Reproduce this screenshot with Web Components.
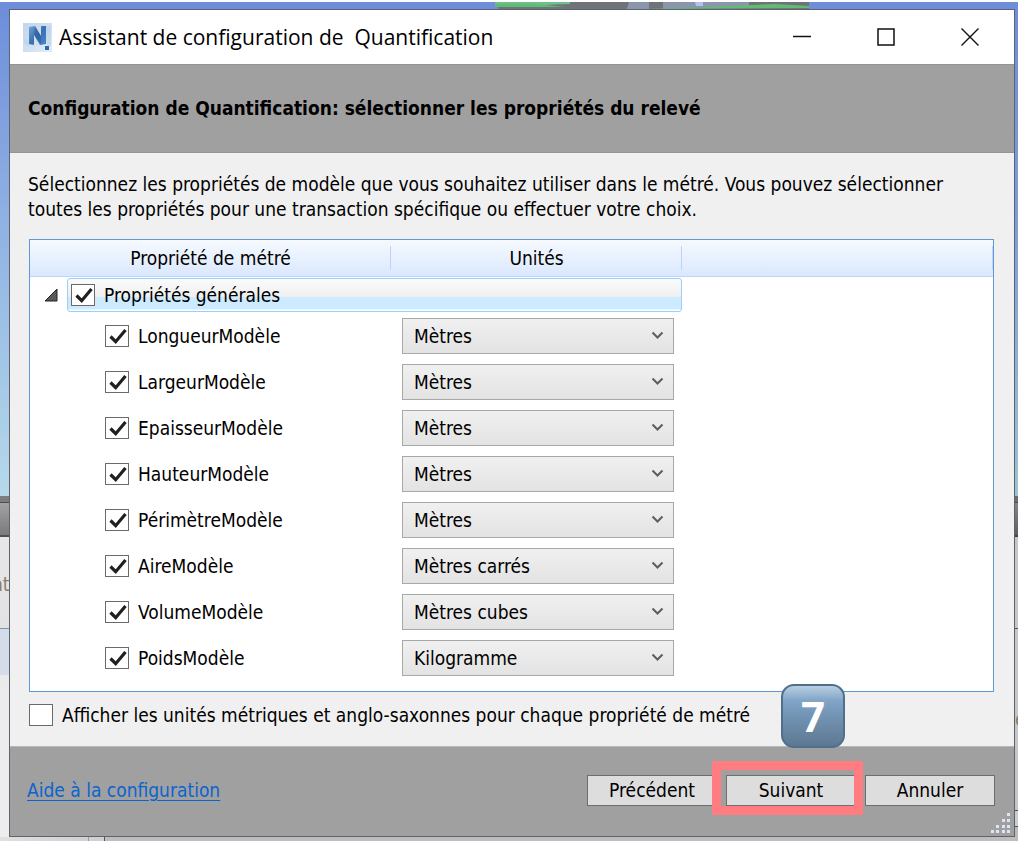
<!DOCTYPE html>
<html lang="fr">
<head>
<meta charset="utf-8">
<title>Assistant de configuration de Quantification</title>
<style>
  body { margin: 0; background: #fff; color: #000; font: 19px/25px "DejaVu Sans Condensed", "DejaVu Sans", sans-serif; }
</style>
</head>
<body>
<desktop-scene>
  <wizard-window>
    <window-titlebar slot="titlebar">Assistant de configuration de&nbsp; Quantification</window-titlebar>
    <wizard-banner slot="banner">Configuration de Quantification: sélectionner les propriétés du relevé</wizard-banner>
    <wizard-intro>Sélectionnez les propriétés de modèle que vous souhaitez utiliser dans le métré. Vous pouvez sélectionner toutes les propriétés pour une transaction spécifique ou effectuer votre choix.</wizard-intro>
    <takeoff-table></takeoff-table>
    <check-field>Afficher les unités métriques et anglo-saxonnes pour chaque propriété de métré</check-field>
    <step-badge slot="badge">7</step-badge>
    <wizard-footer slot="footer">
      <help-link slot="help">Aide à la configuration</help-link>
      <push-button>Précédent</push-button>
      <push-button marked>Suivant</push-button>
      <push-button>Annuler</push-button>
    </wizard-footer>
  </wizard-window>
</desktop-scene>

<script>
const define = (name, html, setup) => {
  const template = document.createElement('template');
  template.innerHTML = html;
  customElements.define(name, class extends HTMLElement {
    constructor() {
      super();
      this.attachShadow({ mode: 'open' }).append(template.content.cloneNode(true));
      if (setup) setup(this.shadowRoot, this);
    }
  });
};

define('desktop-scene', `
  <style>
    :host {
      display: grid; box-sizing: border-box; min-height: 100vh;
      grid-template-columns: 9px minmax(0, 1fr) 3px;
      grid-template-rows: 7px 1fr 4px;
      padding: 2px 5px 0 0;
    }
    .top { grid-column: 1 / -1; background: #6e8edb; display: flex; justify-content: center; padding-left: 287px; }
    .top svg { display: block; }
    .side { overflow: hidden; box-sizing: border-box; white-space: nowrap; line-height: 20px; color: #8d7b6e; }
    .left {
      padding-top: 565px;
      background: linear-gradient(#6e8edb 0, #8fafe2 200px, #b5d9ea 487px, #7d7d7d 487px, #7d7d7d 493px, #4e4e4e 493px, #4e4e4e 494px,
        #a2a2a2 494px, #7a7a7a 526px, #505050 526px, #505050 528px, #e6e6e6 528px, #e2e2e2 619px, #7f93ad 619px, #7f93ad 620px,
        #d5dce9 620px, #d5dce9 666px, #eaeaea 666px, #eee 100%);
    }
    .left span { display: block; margin-left: -8px; }
    .right {
      padding-top: 700px;
      background: linear-gradient(#6e8edb 0, #7e9dd4 200px, #9dc3d3 487px, #6d6d6d 487px, #6d6d6d 493px, #4e4e4e 493px, #4e4e4e 494px,
        #858585 494px, #5f5f5f 526px, #444 526px, #444 528px, #c6c6c6 528px, #c6c6c6 619px, #555 619px, #555 620px,
        #c6c6c6 620px, #c6c6c6 801px, #555 801px, #555 802px, #ccc 802px, #ccc 817px, #555 817px, #555 818px, #bbb 818px);
    }
    .bottom {
      grid-column: 1 / -1;
      background: linear-gradient(90deg, #e0e0e0 0, #d0d0d0 88px, #8ba0b8 88px, #8ba0b8 89px, #d0d0d0 89px, #d0d0d0 104px,
        #555 104px, #555 105px, #bdbdbd 105px);
    }
  </style>
  <div class="top">
    <svg width="315" height="7" viewBox="0 0 315 7" aria-hidden="true">
      <path fill="#6f7377" d="M0 0h314v7H4z"/>
      <path fill="#6cc08a" d="M0 0h75v2L0 5z"/>
      <path fill="#8b95ac" d="M134 0h20v7h-22zM168 0h86v5l-86 2z"/>
      <path fill="#b6bdf5" d="M200 0h8v4h-7z"/>
      <path fill="#62bb72" d="M0 2l40 0 30 3-70 0zM150 7l60-2 70-3 34 2v2z"/>
    </svg>
  </div>
  <div class="side left"><span>nt</span></div>
  <slot></slot>
  <div class="side right">e</div>
  <div class="bottom"></div>
`);

define('wizard-window', `
  <style>
    :host { display: flex; flex-direction: column; box-sizing: border-box; border: 1px solid #5c6270; background: #f0f0f0; min-width: 0; }
    main { flex: 1; position: relative; z-index: 1; display: flex; flex-direction: column; padding: 19px 20px 20px 19px; }
  </style>
  <slot name="titlebar"></slot>
  <slot name="banner"></slot>
  <main><slot></slot><slot name="badge"></slot></main>
  <slot name="footer"></slot>
`);

define('window-titlebar', `
  <style>
    :host { display: flex; align-items: center; height: 54px; padding: 0 2px 0 13px; background: #fff; font: 21px/28px "Open Sans", "Noto Sans", sans-serif; }
    h1 { flex: 1; margin: 0 0 0 7px; font: inherit; white-space: nowrap; }
    svg { display: block; flex: none; }
    button { width: 84px; height: 54px; padding: 0; border: 0; background: none; display: grid; place-items: center; }
    button svg { fill: none; stroke: #111; }
  </style>
  <svg width="29" height="29" viewBox="0 0 29 29" aria-hidden="true">
    <defs>
      <linearGradient id="bg" x1="0" y1="0" x2="1" y2="1"><stop offset="0" stop-color="#c3d6ec"/><stop offset=".5" stop-color="#cfdff0"/><stop offset="1" stop-color="#e3edf7"/></linearGradient>
      <linearGradient id="n" x1="0" y1="0" x2="1" y2="1"><stop offset="0" stop-color="#6fa3d6"/><stop offset=".5" stop-color="#3a70b0"/><stop offset="1" stop-color="#4a86c8"/></linearGradient>
    </defs>
    <path fill="url(#bg)" d="M0 0h29v29H0z"/>
    <path fill="#b4cbe5" d="M1 16l5 2v5l-5-3zM22 3h6v20h-4z" opacity=".5"/>
    <path fill="url(#n)" d="M6 4l6-1 6 10V3h5v18l-6 1-6-10v10l-5-1z"/>
    <path fill="#2a5a98" d="M12 3l6 10v8l-7-10z" opacity=".5"/>
    <path fill="#2f66b0" d="M22 23h4v4h-4z"/>
  </svg>
  <h1><slot></slot></h1>
  <button type="button" aria-label="Réduire"><svg width="18" height="18"><path stroke-width="1.5" d="M0 8.5h18"/></svg></button>
  <button type="button" aria-label="Agrandir"><svg width="18" height="18"><path stroke-width="1.5" d="M1 1h16v16H1z"/></svg></button>
  <button type="button" aria-label="Fermer"><svg width="18" height="18"><path stroke-width="1.4" d="M.5.5l17 17M17.500.5l-17 17"/></svg></button>
`);

define('wizard-banner', `
  <style>
    :host { display: block; padding: 31px 18px; background: #a0a0a0; border-top: 1px solid #949494; border-bottom: 1px solid #949494; }
    h2 { margin: 0; font: inherit; font-weight: bold; }
  </style>
  <h2><slot></slot></h2>
`);

define('wizard-intro', `
  <style>
    :host { display: block; margin: 0 0 17px -1px; }
    p { margin: 0; }
  </style>
  <p><slot></slot></p>
`);

define('check-field', `
  <style>
    :host { display: block; }
    label { display: flex; width: fit-content; align-items: center; gap: 9px; line-height: 22px; white-space: nowrap; }
    input {
      appearance: none; flex: none; box-sizing: border-box; width: 24px; height: 22px; margin: 0;
      border: 1px solid #6a6a6a; background: #fff center / 21px 20px no-repeat;
    }
    input:checked { background-image: url("data:image/svg+xml,%3Csvg xmlns='http://www.w3.org/2000/svg' viewBox='0 0 21 20'%3E%3Cpath d='M3.500 10.500l5.200 5.200L18.500 4' fill='none' stroke='%23202020' stroke-width='3.200'/%3E%3C/svg%3E"); }
  </style>
  <label><input type="checkbox"><slot></slot></label>
`, (root, host) => { root.querySelector('input').checked = host.hasAttribute('checked'); });

define('unit-select', `
  <style>
    :host { display: block; position: relative; width: 272px; }
    select {
      appearance: none; display: block; box-sizing: border-box; width: 100%; height: 36px; margin: 0; padding: 0 30px 0 11px;
      border: 1px solid #a8a8a8; border-radius: 0; background: linear-gradient(#f0f0f0, #e3e3e3); color: #000; font: inherit;
    }
    svg { position: absolute; right: 10px; top: 12px; pointer-events: none; }
  </style>
  <select></select>
  <svg width="13" height="10" aria-hidden="true"><path d="M1.500 2.500l5 5 5-5" fill="none" stroke="#5e5e5e" stroke-width="2"/></svg>
`);

define('takeoff-table', `
  <style>
    :host { display: block; flex: 1; margin-bottom: 12px; border: 1px solid #5f98d6; background: #fff; }
    table { width: 100%; border-collapse: collapse; table-layout: fixed; }
    .name { width: 361px; }
    .unit { width: 291px; }
    thead tr { height: 37px; background: linear-gradient(#f6faff, #d9e7fd); box-shadow: inset 0 -1px #bcd5fb; }
    th, td { padding: 0; font-weight: normal; text-align: left; }
    th { text-align: center; background: linear-gradient(#bcd5fb, #bcd5fb) right 6px / 1px 24px no-repeat; }
    .group { display: flex; align-items: center; height: 36px; }
    .group button { width: 37px; height: 34px; padding: 0 9px 0 0; border: 0; background: none; display: grid; place-items: center end; }
    .group check-field {
      flex: 1; box-sizing: border-box; height: 34px; padding: 5px 3px; border: 1px solid #99cfff; border-radius: 3px;
      background: linear-gradient(#fbfbfb 0, #efefef 18px, #cdebff 18px, #cdebff 30px, #fff 31px);
    }
    tbody tr:not(.head) { height: 46px; }
    .head { height: 36px; }
    .item { padding-left: 75px; }
    .choice { padding-left: 11px; }
  </style>
  <table>
    <colgroup><col class="name"><col class="unit"><col></colgroup>
    <thead><tr><th scope="col">Propriété de métré</th><th scope="col">Unités</th><th aria-label="Vide"></th></tr></thead>
    <tbody>
      <tr class="head"><td colspan="2"><div class="group">
        <button type="button" aria-label="Replier Propriétés générales" aria-expanded="true"><svg width="14" height="14"><path d="M13 1v12H1z" fill="#595959" stroke="#222"/></svg></button>
        <check-field checked>Propriétés générales</check-field>
      </div></td><td></td></tr>
    </tbody>
  </table>
`, root => {
  const units = ['Mètres', 'Mètres carrés', 'Mètres cubes', 'Kilogramme'];
  const rows = [['LongueurModèle', 0], ['LargeurModèle', 0], ['EpaisseurModèle', 0], ['HauteurModèle', 0],
    ['PérimètreModèle', 0], ['AireModèle', 1], ['VolumeModèle', 2], ['PoidsModèle', 3]];
  const body = root.querySelector('tbody');
  for (const [name, unit] of rows) {
    const tr = document.createElement('tr');
    tr.innerHTML = `<td class="item"><check-field checked>${name}</check-field></td><td class="choice"><unit-select></unit-select></td><td></td>`;
    body.append(tr);
    customElements.upgrade(tr);
    const select = tr.querySelector('unit-select').shadowRoot.querySelector('select');
    select.setAttribute('aria-label', 'Unité de ' + name);
    select.append(new Option(units[unit], units[unit], true, true));
    units.filter((u, i) => i !== unit).forEach(u => select.append(new Option(u)));
  }
});

define('step-badge', `
  <style>
    :host {
      position: absolute; right: 169px; bottom: -2px; box-sizing: border-box; width: 64px; height: 64px;
      display: grid; place-items: center; border: 2px solid #4f6f8d; border-radius: 13px; color: #fff;
      background: linear-gradient(#b9cfe2 0, #83a6c8 14px, #7799bb 24px, #5d7891 100%);
      font: bold 42px/60px "Open Sans", sans-serif;
    }
  </style>
  <slot></slot>
`);

define('wizard-footer', `
  <style>
    :host {
      position: relative; display: flex; align-items: center; gap: 9px; box-sizing: border-box; height: 90px; padding: 0 19px 2px 17px;
      background: #a0a0a0; border-top: 1px solid #b8b8b8;
    }
    ::slotted([slot="help"]) { margin-right: auto; }
    svg { position: absolute; right: 3px; bottom: 2px; }
  </style>
  <slot name="help"></slot>
  <slot></slot>
  <svg width="21" height="22" aria-hidden="true">
    <g fill="#dde4f2">
      <path d="M17 1h3v3h-3zM17 7h3v3h-3zM17 13h3v3h-3zM17 18h3v3h-3zM12 7h3v3h-3zM12 13h3v3h-3zM12 18h3v3h-3zM6 13h3v3H6zM6 18h3v3H6zM1 18h3v3H1z"/>
    </g>
  </svg>
`);

define('help-link', `
  <style>
    :host { display: block; }
    a { color: #0a64d0; text-decoration: underline; text-underline-offset: 3px; }
  </style>
  <a href="#aide"><slot></slot></a>
`);

define('push-button', `
  <style>
    :host { display: block; position: relative; width: 130px; }
    button { display: block; width: 100%; height: 31px; box-sizing: border-box; padding: 0; border: 1px solid #6e6e6e; background: #ddd; color: #000; font: inherit; }
    :host([marked]) { z-index: 1; }
    :host([marked])::after { content: ""; position: absolute; inset: -14px -7px -9px -14px; border: 9px solid #ff7c80; pointer-events: none; }
  </style>
  <button type="button"><slot></slot></button>
`);
</script>
</body>
</html>
